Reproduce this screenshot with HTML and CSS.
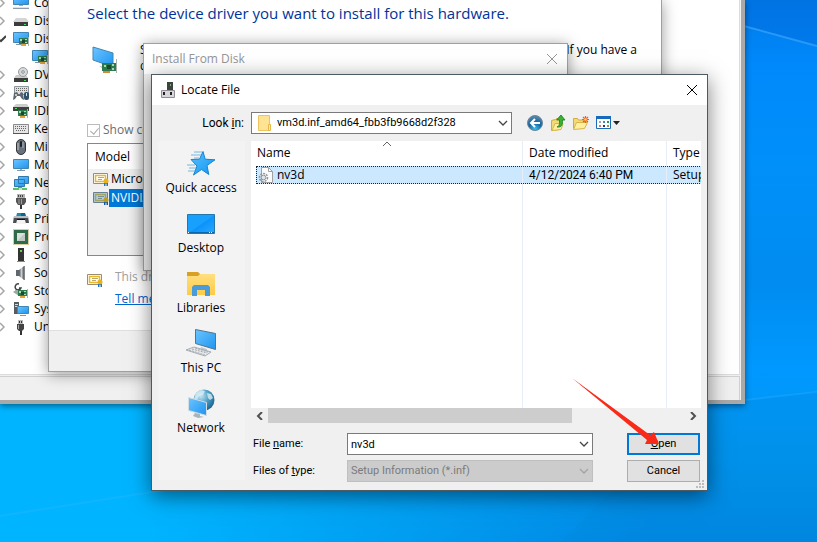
FILE: index.html
```html
<!DOCTYPE html>
<html lang="en">
<head>
<meta charset="utf-8">
<title>Locate File</title>
<link rel="stylesheet" href="styles.css">
</head>
<body>
<svg class="sprite" aria-hidden="true">
  <defs>
    <linearGradient id="blue" x1="0" y1="0" x2="1" y2="1"><stop offset="0" stop-color="#6cc5ff"/><stop offset="1" stop-color="#1e94f0"/></linearGradient>
    <linearGradient id="star" x1="0" y1="0" x2="1" y2="1"><stop offset="0" stop-color="#5cc0fb"/><stop offset="1" stop-color="#0e96f5"/></linearGradient>
    <linearGradient id="desk" x1="0" y1="0" x2="1" y2="1"><stop offset="0" stop-color="#18a0ff"/><stop offset=".5" stop-color="#18a0ff"/><stop offset=".52" stop-color="#0c92fa"/><stop offset="1" stop-color="#2ca9ff"/></linearGradient>
    <linearGradient id="yellow" x1="0" y1="0" x2="0" y2="1"><stop offset="0" stop-color="#ffdf80"/><stop offset="1" stop-color="#ffcb45"/></linearGradient>
    <radialGradient id="globe" cx=".35" cy=".3" r=".8"><stop offset="0" stop-color="#c6e6f3"/><stop offset=".5" stop-color="#4b9cc4"/><stop offset="1" stop-color="#145a86"/></radialGradient>
    <radialGradient id="orb" cx=".5" cy=".9" r=".9"><stop offset="0" stop-color="#38c4ee"/><stop offset=".5" stop-color="#16639f"/><stop offset="1" stop-color="#5e8cae"/></radialGradient>
    <linearGradient id="metal" x1="0" y1="0" x2="1" y2="0"><stop offset="0" stop-color="#555"/><stop offset=".5" stop-color="#ccc"/><stop offset="1" stop-color="#555"/></linearGradient>
  </defs>
  <symbol id="card" viewBox="0 0 10 10"><path d="M0 1h9v6H0z" fill="#2c7a4e"/><path d="M9 0h1v9H9z" fill="#aab2ae"/><path d="M1 2h2v2H1zM6 2h2v1H6zM6 5h2v1H6z" fill="#a9d8b2"/><path d="M3 3h3v3H3z" fill="#174a2f"/><path d="M2 7h5v2H2z" fill="#e0a53a"/></symbol>
  <symbol id="monitor" viewBox="0 0 16 16"><path d="M.5 2.500h15v9H.5z" fill="url(#blue)" stroke="#3f86b5"/><path d="M7 12h2v1H7z" fill="#9ab"/><path d="M4 13h8v1H4z" fill="#8298a8"/></symbol>
  <symbol id="computer" viewBox="0 0 16 16"><path d="M.5 1.500h15v8H.5z" fill="url(#blue)" stroke="#3f86b5"/><path d="M6 10h4v1H6z" fill="#9ab"/><path d="M0 13h16v1H0z" fill="#8a9cae"/><path d="M0 12h16v1H0z" fill="#dce4ea"/></symbol>
  <symbol id="display" viewBox="0 0 16 16"><path d="M.5 1.500h15v10H.5z" fill="url(#blue)" stroke="#3f86b5"/><path d="M3 13h6v1H3z" fill="#8298a8"/><use href="#card" x="6" y="6" width="10" height="10"/></symbol>
  <symbol id="disk" viewBox="0 0 16 16"><path d="M3 5h10l3 4H0z" fill="#d5d5d5"/><path d="M1 9h14v4H1z" fill="#3c3c3c"/><path d="M11 11h2v1h-2z" fill="#4ce05a"/></symbol>
  <symbol id="dvd" viewBox="0 0 16 16"><path d="M3 8h10l2 3H1z" fill="#ccc"/><path d="M1 11h14v4H1z" fill="#3c3c3c"/><circle cx="10" cy="5" r="4.500" fill="#d6d9db" stroke="#9a9a9a"/><circle cx="10" cy="5" r="1.300" fill="#fff" stroke="#888"/><path d="M11 13h2v1h-2z" fill="#4ce05a"/></symbol>
  <symbol id="keyboard" viewBox="0 0 16 16"><path d="M.5 3.500h15v9H.5z" fill="#e6e6e6" stroke="#8b8b8b"/><path d="M2 5.500h12M2 7.500h12M3 9.500h10" stroke="#666" stroke-dasharray="1 1"/><path d="M0 12h16v1H0z" fill="#555"/></symbol>
  <symbol id="hid" viewBox="0 0 16 16"><path d="M1.500 1.500h14v8h-14z" fill="#dce0e3" stroke="#8d949a"/><path d="M3 3.500h11M3 5.500h11" stroke="#666" stroke-dasharray="1 1"/><path d="M0 15l1-7 3-1 2 3 2-3 2 1 1 7-2-1-2-3H4l-2 3z" fill="#5d666f"/><rect x="11" y="7" width="5" height="8" rx="2" fill="#32506a"/><path d="M13 8h1v3h-1z" fill="#d4e4ef"/><path d="M2 9h2v2H2z" fill="#c8c8c8"/></symbol>
  <symbol id="ide" viewBox="0 0 16 16"><path d="M3 1h11l2 3H0z" fill="#ccc"/><path d="M0 4h16v4H0z" fill="#404040"/><path d="M2 5h2v1H2z" fill="#4ce05a"/><use href="#card" x="5" y="6" width="10" height="10"/></symbol>
  <symbol id="mouse" viewBox="0 0 16 16"><rect x="3.500" y=".5" width="9" height="15" rx="4.500" fill="#68717c" stroke="#333"/><path d="M5 4v7" stroke="#c3ccd5"/><rect x="7" y="2" width="2" height="6" rx="1" fill="#1c2228"/><path d="M10 3v6" stroke="#aab4be"/></symbol>
  <symbol id="net" viewBox="0 0 16 16"><path d="M5.500 1.500h10v7h-10zM1.500 4.500h10v7h-10z" fill="url(#blue)" stroke="#2f79ac"/><path d="M5 12h4v1H5z" fill="#888"/><path d="M0 13h14v2H0z" fill="#5cc163"/><path d="M6 13h3v2H6z" fill="#c5e6c7"/></symbol>
  <symbol id="port" viewBox="0 0 16 16"><path d="M4 1h8v4H4z" fill="#b3b3b3"/><path d="M5 2h1v2H5zM7 2h1v2H7zM9 2h1v2H9z" fill="#444"/><path d="M3 5h10v4l-2 3H5L3 9z" fill="#555"/><path d="M6 6v5M8.500 6v5" stroke="#a0a0a0"/><path d="M7 12h2v4H7z" fill="#333"/></symbol>
  <symbol id="printer" viewBox="0 0 16 16"><path d="M4 2h8l1 4H3z" fill="#238ca8"/><path d="M8 2h4l1 4H8z" fill="#165f92"/><path d="M1 5h14l1 7H0z" fill="#484d52"/><path d="M1 5h14v2H1z" fill="#b7bec4"/><path d="M4 9h8l1 4H3z" fill="#f3f3f3"/><path d="M4 8h8v1H4z" fill="#111"/></symbol>
  <symbol id="cpu" viewBox="0 0 16 16"><path d="M.5 .5h15v15H.5z" fill="none" stroke="#b89a48" stroke-dasharray="1 1"/><path d="M1 1h14v14H1z" fill="#2f6a49"/><path d="M4 4h8v8H4z" fill="#dce0dc"/><path d="M4 12l8-8v8z" fill="#bfc8c1"/></symbol>
  <symbol id="soft" viewBox="0 0 16 16"><path d="M5 1h6v13H5z" fill="#333"/><path d="M7 3h2v2H7z" fill="#62d353"/><path d="M4 14h8v1H4z" fill="#888"/></symbol>
  <symbol id="sound" viewBox="0 0 16 16"><path d="M3 5h3v6H3z" fill="#5e6770"/><path d="M6 5l5-4v14l-5-4z" fill="url(#metal)"/><path d="M11 1h1v14h-1z" fill="#7e8790"/></symbol>
  <symbol id="storage" viewBox="0 0 16 16"><path d="M6 1a3 3 0 1 0 2 4H6M2 9l5-3" fill="none" stroke="#444" stroke-width="1.500"/><path d="M0 9l3-2h12v6H6z" fill="#9ba9a1"/><use href="#card" x="5" y="6" width="10" height="10"/></symbol>
  <symbol id="system" viewBox="0 0 16 16"><path d="M1 1h5v12H1z" fill="#555c62"/><path d="M2 3h3v1H2zM2 5h3v1H2z" fill="#d5dbe0"/><path d="M4.500 5.500h11v7h-11z" fill="url(#blue)" stroke="#3f86b5"/><path d="M7 14h6v1H7z" fill="#8298a8"/></symbol>
  <symbol id="usb" viewBox="0 0 16 16"><path d="M5 1h5v4H5z" fill="#bbb"/><path d="M6 2h1v2H6zM8 2h1v2H8z" fill="#333"/><path d="M4 5h7v5l-2 2H6l-2-2z" fill="#444"/><path d="M5.500 6v4" stroke="#aaa"/><path d="M7 12h2v4H7z" fill="#333"/></symbol>
  <symbol id="chev" viewBox="0 0 6 10"><path d="M0 1l4 4-4 4" fill="none" stroke="#a6a6a6" stroke-width="1.500"/></symbol>
  <symbol id="chev-open" viewBox="0 0 6 10"><path d="M0 6l1 1 5-5" fill="none" stroke="#404040" stroke-width="2"/></symbol>
  <symbol id="cert" viewBox="0 0 16 14"><path d="M.5 1.500h14v10H.5z" fill="#fff" stroke="#998e70"/><path d="M2.500 3.500h10v6h-10z" fill="none" stroke="#e9b92c" stroke-width="1.500"/><path d="M5 5.500h6M5 7.500h4" stroke="#bda76d"/><circle cx="13" cy="9" r="2.500" fill="#e9b21c"/><path d="M11 11h1.500v3H11zM13.500 11H15v3h-1.500z" fill="#2376c0"/></symbol>
  <symbol id="cert-on" viewBox="0 0 16 14"><path d="M.5 1.500h14v10H.5z" fill="#a9cdea" stroke="#667f91"/><path d="M2.500 3.500h10v6h-10z" fill="none" stroke="#a6a35a" stroke-width="1.500"/><path d="M5 5.500h6M5 7.500h4" stroke="#788e91"/><circle cx="13" cy="9" r="2.500" fill="#bb9c24"/><path d="M11 11h1.500v3H11zM13.500 11H15v3h-1.500z" fill="#14569b"/></symbol>
  <symbol id="close" viewBox="0 0 12 12"><path d="M1 1l10 10M11 1L1 11" fill="none" stroke="currentColor"/></symbol>
  <symbol id="down" viewBox="0 0 10 6"><path d="M1 1l4 4 4-4" fill="none" stroke="currentColor" stroke-width="1.300"/></symbol>
</svg>

<main class="desktop">
  <svg class="rays" viewBox="0 0 817 542" preserveAspectRatio="none" aria-hidden="true">
    <path d="M740 24L817 46V0H740z" fill="#0068da" opacity=".35"/>
    <path d="M740 25L817 46" stroke="#45a9ff" stroke-width="2" opacity=".6"/>
    <path d="M0 516L700 405L817 392" stroke="#35b6ff" stroke-width="2" opacity=".3" fill="none"/>
    <path d="M700 406L817 392V542H560z" fill="#0087d8" opacity=".2"/>
  </svg>

  <section class="window manager" aria-label="Device Manager">
    <ul class="tree">
      <li><svg class="tw"><use href="#chev"/></svg><svg class="i16"><use href="#computer"/></svg>Co</li>
      <li><svg class="tw"><use href="#chev"/></svg><svg class="i16"><use href="#disk"/></svg>Dis</li>
      <li><svg class="tw"><use href="#chev-open"/></svg><svg class="i16"><use href="#display"/></svg>Dis</li>
      <li class="child"><svg class="i16"><use href="#display"/></svg></li>
      <li><svg class="tw"><use href="#chev"/></svg><svg class="i16"><use href="#dvd"/></svg>DV</li>
      <li><svg class="tw"><use href="#chev"/></svg><svg class="i16"><use href="#hid"/></svg>Hu</li>
      <li><svg class="tw"><use href="#chev"/></svg><svg class="i16"><use href="#ide"/></svg>IDE</li>
      <li><svg class="tw"><use href="#chev"/></svg><svg class="i16"><use href="#keyboard"/></svg>Key</li>
      <li><svg class="tw"><use href="#chev"/></svg><svg class="i16"><use href="#mouse"/></svg>Mi</li>
      <li><svg class="tw"><use href="#chev"/></svg><svg class="i16"><use href="#monitor"/></svg>Mo</li>
      <li><svg class="tw"><use href="#chev"/></svg><svg class="i16"><use href="#net"/></svg>Ne</li>
      <li><svg class="tw"><use href="#chev"/></svg><svg class="i16"><use href="#port"/></svg>Po</li>
      <li><svg class="tw"><use href="#chev"/></svg><svg class="i16"><use href="#printer"/></svg>Pri</li>
      <li><svg class="tw"><use href="#chev"/></svg><svg class="i16"><use href="#cpu"/></svg>Pro</li>
      <li><svg class="tw"><use href="#chev"/></svg><svg class="i16"><use href="#soft"/></svg>Sof</li>
      <li><svg class="tw"><use href="#chev"/></svg><svg class="i16"><use href="#sound"/></svg>Sou</li>
      <li><svg class="tw"><use href="#chev"/></svg><svg class="i16"><use href="#storage"/></svg>Sto</li>
      <li><svg class="tw"><use href="#chev"/></svg><svg class="i16"><use href="#system"/></svg>Sys</li>
      <li><svg class="tw"><use href="#chev"/></svg><svg class="i16"><use href="#usb"/></svg>Un</li>
    </ul>
    <div class="status"></div>
  </section>

  <section class="window wizard" aria-label="Update Drivers">
    <div class="wizard-body">
      <h1>Select the device driver you want to install for this hardware.</h1>
      <div class="intro">
        <svg class="device" viewBox="0 0 28 28"><path d="M1 1l20 6v14L1 14z" fill="url(#blue)" stroke="#3f86b5"/><path d="M7 20l8 1-4 2z" fill="#b7c5ce"/><path d="M10 17h14v8H10z" fill="#2c7a4e"/><path d="M24 13h1v14h-1z" fill="#aab2ae"/><path d="M12 19h2v2h-2zM20 18h2v2h-2zM20 22h2v2h-2z" fill="#a9d8b2"/><path d="M15 19h4v4h-4z" fill="#174a2f"/><path d="M11 25h7v2h-7z" fill="#cf8c35"/></svg>
        <p><span>S<br>d</span><span>If you have a</span></p>
      </div>
      <label class="compat"><input type="checkbox" checked disabled>Show co</label>
      <ul class="models">
        <li class="head">Model</li>
        <li><svg class="cert"><use href="#cert"/></svg><span>Micros</span></li>
        <li class="on"><svg class="cert"><use href="#cert-on"/></svg><span>NVIDIA</span></li>
      </ul>
      <div class="signed">
        <svg class="cert"><use href="#cert"/></svg>
        <p>This dri<br><a href="#why">Tell me</a></p>
      </div>
    </div>
    <div class="wizard-foot"></div>
  </section>

  <section class="window install" aria-label="Install From Disk">
    <header class="titlebar"><h2>Install From Disk</h2><button class="x" aria-label="Close Install From Disk"><svg><use href="#close"/></svg></button></header>
  </section>

  <section class="window locate" role="dialog" aria-label="Locate File">
    <header class="titlebar">
      <svg class="i16" viewBox="0 0 16 16"><path d="M7 0h6v8H7z" fill="#3c4440"/><path d="M10 2h1v2h-1z" fill="#77b56b"/><path d="M1.500 8.500h13v7h-13z" fill="#d8d8dc" stroke="#8f8f94"/><path d="M3 10h2v3H3zM10 10h2v3h-2z" fill="#222"/></svg>
      <h2>Locate File</h2><button class="x" aria-label="Close"><svg><use href="#close"/></svg></button>
    </header>
    <div class="lookbar">
      <label for="look">Look <u>i</u>n:</label>
      <div class="combo look">
        <svg class="folder" viewBox="0 0 14 16"><path d="M.5 .5h11v15H.5z" fill="#ffe394" stroke="#edc55c"/><path d="M10.500 9.500h2v6h-2z" fill="#ffe9a8" stroke="#e6b84a"/></svg>
        <select id="look"><option>vm3d.inf_amd64_fbb3fb9668d2f328</option></select>
        <svg class="arrow"><use href="#down"/></svg>
      </div>
      <div class="tools">
        <button aria-label="Back"><svg viewBox="0 0 16 16"><circle cx="8" cy="8" r="7.500" fill="url(#orb)" stroke="#6d8596"/><path d="M13 8H4M8 4L4 8l4 4" fill="none" stroke="#fff" stroke-width="2"/></svg></button>
        <button aria-label="Up one level"><svg viewBox="0 0 16 16"><path d="M1.500 5.500l4-1 1-1h3v11l-8 1z" fill="#f3da78" stroke="#d2ac3c"/><path d="M2 15.500l3-7h8l-2 6z" fill="#ffef9f" stroke="#d8b44a"/><path d="M7 12c3-1 2.500-4 2.500-7H6.500L11 0l4 5h-2.500c0 5-.5 7.500-5.500 7z" fill="#39b234" stroke="#197c20" stroke-width=".8"/></svg></button>
        <button aria-label="New folder"><svg viewBox="0 0 16 16"><path d="M.5 13.500v-10h4l1 1.500h6v3" fill="#f3da78" stroke="#d2ac3c"/><path d="M.5 14.500l3-7h11l-3 6z" fill="#ffef9f" stroke="#d8b44a"/><path d="M12.500 1v7M9 4.500h7M10 2l5 5M15 2l-5 5" stroke="#f05a28" stroke-width="1.200"/><circle cx="12.500" cy="4.500" r="1.300" fill="#ffd75e"/></svg></button>
        <button class="view" aria-label="View menu"><svg viewBox="0 0 25 16"><path d="M.5 1.500h14v12H.5z" fill="#fff" stroke="#1a6cb8"/><path d="M0 1h15v3H0z" fill="#1769bd"/><path d="M3 6h2v2H3z" fill="#a8a0b8"/><path d="M7 6h2v2H7z" fill="#388ad0"/><path d="M11 6h2v2h-2z" fill="#35963c"/><path d="M3 10h2v2H3z" fill="#d67865"/><path d="M7 10h2v2H7z" fill="#24357d"/><path d="M11 10h2v2h-2z" fill="#ad8d32"/><path d="M17 6h7l-3.500 4z" fill="#222"/></svg></button>
      </div>
    </div>
    <div class="middle">
      <nav class="places" aria-label="Places">
        <button><svg viewBox="0 0 32 32"><path d="M18 3.500l2.200 7.700 9.800.6-8 5.700 1.800 9-7.300-5-8 5.500 3.500-9L6 11.500l8.500-.3z" fill="url(#star)" stroke="#1684cf" stroke-linejoin="round"/><path d="M9 4h8M6 7h10M9 10h5M2 17h8M4 20h7M3 23h7" stroke="#74b8dc"/></svg>Quick access</button>
        <button><svg viewBox="0 0 32 32"><path d="M2.500 6.500h27v19h-27z" fill="url(#desk)" stroke="#2377ad"/><path d="M3 24.500h26" stroke="#0b67a8"/><path d="M3 24.500h2M24 24.500h4" stroke="#fff" stroke-dasharray="1 1"/></svg>Desktop</button>
        <button><svg viewBox="0 0 32 32"><path d="M2 4h11l2 2v4H2z" fill="#d9a023"/><path d="M2 8h11l2-2h15v21H2z" fill="url(#yellow)"/><path d="M7 28V19l2-2h14l2 2v9h-5v-6h-8v6z" fill="#4a9bd9"/></svg>Libraries</button>
        <button><svg viewBox="0 0 32 32"><path d="M10.500 1.500l20 4v16l-20-6z" fill="url(#blue)" stroke="#52758d"/><path d="M16 19l6 2v2l5 1-8 2-4-2z" fill="#c3cbd1"/><path d="M1 22l8-3 17 5-6 4z" fill="#e7eaec" stroke="#a7adb1"/><path d="M4 22l16 5M7 21l15 4M10 20l13 4" stroke="#a2a9ae" stroke-dasharray="2 1"/></svg>This PC</button>
        <button><svg viewBox="0 0 32 32"><circle cx="19" cy="12" r="10.500" fill="url(#globe)"/><path d="M11 5l5-3 4 1-2 4-4 1-2 4-3-1zM22 5l4 1 2 4-3 2-2-2z" fill="#d9eef5" opacity=".8"/><path d="M3.500 9.500l18 5v13l-18-5z" fill="url(#blue)" stroke="#d3dde3"/><path d="M10 25l5 1v2l4 1-6 1-5-2z" fill="#aab4bb"/></svg>Network</button>
      </nav>
      <div class="list">
        <div class="list-view">
          <table>
            <colgroup><col class="c-name"><col class="c-date"><col class="c-type"></colgroup>
            <thead><tr><th><svg class="sort" viewBox="0 0 10 6"><path d="M1 5l4-4 4 4" fill="none" stroke="#666"/></svg>Name</th><th>Date modified</th><th>Type</th></tr></thead>
            <tbody>
              <tr class="file"><td><div class="cell first"><svg class="i16" viewBox="0 0 16 16"><path d="M3.500 .5h7l4 4v11h-11z" fill="#fafafa" stroke="#a0a0a0"/><path d="M10.500 .5v4h4" fill="none" stroke="#a0a0a0"/><circle cx="5.500" cy="10.500" r="4" fill="none" stroke="#8d979e" stroke-width="1.500" stroke-dasharray="2 1"/><circle cx="5.500" cy="10.500" r="2.300" fill="#dfe4e7" stroke="#8d979e"/></svg>nv3d</div></td><td><div class="cell date">4/12/2024 6:40 PM</div></td><td><div class="cell">Setup</div></td></tr>
              <tr class="fill"><td></td><td></td><td></td></tr>
            </tbody>
          </table>
        </div>
        <div class="scroll">
          <button aria-label="Scroll left"><svg viewBox="0 0 8 8"><path d="M6 0L2 4l4 4" fill="none" stroke="#505050" stroke-width="2"/></svg></button>
          <div class="track"><div class="thumb"></div></div>
          <button aria-label="Scroll right"><svg viewBox="0 0 8 8"><path d="M2 0l4 4-4 4" fill="none" stroke="#505050" stroke-width="2"/></svg></button>
        </div>
        <form class="fields">
          <label for="fname">File <u>n</u>ame:</label>
          <div class="combo"><input id="fname" type="text" value="nv3d"><svg class="arrow"><use href="#down"/></svg></div>
          <button type="button" class="btn primary"><u>O</u>pen</button>
          <label for="ftype">Files of <u>t</u>ype:</label>
          <div class="combo off"><select id="ftype" disabled><option>Setup Information (*.inf)</option></select><svg class="arrow"><use href="#down"/></svg></div>
          <button type="button" class="btn">Cancel</button>
        </form>
      </div>
    </div>
    <svg class="grip" viewBox="0 0 8 8"><path d="M6 0h2v2H6zM3 3h2v2H3zM6 3h2v2H6zM0 6h2v2H0zM3 6h2v2H3zM6 6h2v2H6z" fill="#bdbdbd"/></svg>
    <svg class="pointer" viewBox="0 0 88 68"><path d="M0 0L78 57L82 54L87 66L73 66L75 62z" fill="#fa2a18"/></svg>
  </section>
</main>
</body>
</html>
```
FILE: styles.css
```css
* { box-sizing: border-box; }

body {
  margin: 0;
  font: 12px/16px "Open Sans", "Noto Sans", sans-serif;
  color: #000;
}

h1, h2, p, ul { margin: 0; padding: 0; font-weight: 400; }
ul { list-style: none; }
svg { display: block; flex: none; }
button, input, select { font: inherit; color: inherit; margin: 0; }
button { padding: 0; border: 0; background: none; }

.sprite { position: absolute; width: 0; height: 0; }
.i16 { width: 16px; height: 16px; }

.desktop {
  position: relative;
  height: 100vh;
  overflow: hidden;
  background:
    linear-gradient(90deg, #00b4ff 0, #00b4ff 18%, transparent 80%),
    linear-gradient(180deg, #007ae8 0, #0089fb 12%, #0090fa 30%, #008cf0 52%, #0099ff 68%, #0094ef 85%, #0086e2 100%);
}
.rays { position: absolute; inset: 0; width: 100%; height: 100%; }

.window { position: absolute; display: flex; flex-direction: column; background: #f0f0f0; }

/* Device Manager */
.manager {
  inset: 0 72px 138px 0;
  border: solid #a9a9a9;
  border-width: 0 4px 4px 0;
  box-shadow: 0 2px 6px rgba(0, 0, 0, .45);
}
.tree {
  flex: 1;
  min-height: 0;
  overflow: hidden;
  margin: -6px 1px 0 0;
  background: #fff;
  border: solid #dcdcdc;
  border-width: 0 1px 1px 0;
}
.tree li { display: flex; align-items: center; height: 18px; white-space: nowrap; }
.tree .tw { width: 6px; height: 10px; margin-right: 7px; }
.tree .i16 { margin-right: 5px; }
.tree .child { padding-left: 32px; }
.status { height: 24px; margin: 1px 1px 0 0; border-top: 1px solid #d0d0d0; border-right: 1px solid #d0d0d0; }

/* Driver wizard */
.wizard {
  inset: 0 155px 170px 48px;
  border: 1px solid #a0a0a0;
  border-top: 0;
  box-shadow: 0 2px 14px rgba(0, 0, 0, .4);
}
.wizard-body { flex: 1; min-height: 0; padding: 1px 24px 0 38px; background: #fff; border-bottom: 1px solid #dfdfdf; }
.wizard-foot { height: 40px; }
.wizard h1 { font-size: 15px; line-height: 24px; color: #039; white-space: nowrap; }
.intro { display: flex; gap: 20px; margin-top: 17px; padding-left: 5px; }
.device { width: 28px; height: 28px; margin-top: 4px; }
.intro p { flex: 1; display: flex; justify-content: space-between; white-space: nowrap; }
.compat { display: flex; align-items: center; gap: 3px; margin-top: 48px; height: 16px; color: #6d6d6d; }
.compat input { appearance: none; width: 13px; height: 13px; border: 1px solid #bcbcbc; background: #fff; }
.compat input:checked::after { content: ""; display: block; width: 4px; height: 7px; margin: 1px 0 0 4px; border: solid #a8a8a8; border-width: 0 1px 1px 0; transform: rotate(40deg); }
.models { height: 113px; width: 50%; margin-top: 5px; border: 1px solid #828790; background: #f0f0f0; }
.models li { display: flex; align-items: center; height: 19px; padding-left: 5px; white-space: nowrap; }
.models .head { height: 25px; padding-left: 7px; background: #fff; }
.models span { flex: 1; padding: 0 3px 0 2px; line-height: 18px; }
.models .on span { background: #0078d7; color: #fff; }
.cert { width: 16px; height: 14px; }
.signed { display: flex; gap: 12px; margin-top: 10px; line-height: 22px; color: #a0a0a0; }
.signed .cert { margin-top: 7px; }
.signed a { color: #0066cc; }

/* Title bars */
.titlebar { display: flex; align-items: center; height: 30px; background: #fff; }
.titlebar h2 { flex: 1; font-size: 12px; }
.x { display: grid; place-items: center; width: 30px; height: 30px; }
.x svg { width: 12px; height: 12px; }

.install {
  inset: 43px 249px 271px 143px;
  border: 1px solid #a0a0a0;
  box-shadow: 0 2px 14px rgba(0, 0, 0, .4);
}
.install .titlebar { padding-left: 8px; color: #969696; }

/* Locate File dialog */
.locate {
  inset: 74px 109px 51px 151px;
  border: 1px solid #4b5a63;
  box-shadow: 0 5px 20px rgba(0, 0, 0, .5);
}
.locate .titlebar { padding-left: 8px; gap: 5px; }
.lookbar { display: flex; align-items: center; height: 36px; padding-left: 6px; font-family: Roboto, sans-serif; }
.lookbar label { width: 86px; text-align: right; margin-right: 7px; }
.combo { position: relative; height: 22px; }
.combo select, .combo input {
  appearance: none;
  display: block;
  width: 100%;
  height: 100%;
  padding: 0 20px 0 3px;
  border: 1px solid #7a7a7a;
  border-radius: 0;
  outline: 0;
  background: #fff;
  font-size: 11px;
}
.look { flex: 0 1 261px; }
.look select { padding-left: 25px; }
.look .folder { position: absolute; left: 7px; top: 3px; width: 14px; height: 16px; }
.combo .arrow { position: absolute; right: 4px; top: 8px; width: 10px; height: 6px; color: #444; pointer-events: none; }
.off select { color: #7b7b7b; opacity: 1; background: #ccc; border-color: #bfbfbf; }
.off .arrow { color: #a3a3a3; }
.tools { display: flex; gap: 7px; margin-left: 15px; }
.tools svg { width: 16px; height: 16px; }
.tools .view svg { width: 25px; }

.middle { flex: 1; min-height: 0; display: flex; gap: 6px; padding: 0 6px 10px; }
.places { width: 87px; padding-top: 7px; background: #f3f3f3; }
.places button { display: flex; flex-direction: column; align-items: center; width: 86px; height: 60px; }
.places svg { width: 32px; height: 32px; }
.list { flex: 1; min-width: 0; display: flex; flex-direction: column; }
.list-view { flex: 1; min-height: 0; overflow: hidden; background: #fff; }
table { table-layout: fixed; width: 520px; height: 100%; border-collapse: separate; border-spacing: 0; }
.c-name { width: 272px; }
.c-date { width: 144px; }
th, td { padding: 0; text-align: left; font-weight: 400; border-right: 1px solid #e8eef8; white-space: nowrap; }
th { position: relative; height: 25px; padding: 0 6px 1px; }
.sort { position: absolute; left: 131px; top: 0; width: 10px; height: 6px; }
.cell { display: flex; align-items: center; height: 18px; padding-left: 6px; border: dotted #222; border-width: 1px 0; background: #cce8ff; }
.cell.first { margin-left: 5px; padding-left: 1px; gap: 3px; border-left-width: 1px; }
.cell.date { font-family: Roboto, sans-serif; }
.file { height: 18px; }

.scroll { display: flex; height: 15px; }
.scroll button { width: 17px; display: grid; place-items: center; }
.scroll button svg { width: 8px; height: 8px; }
.track { flex: 1; }
.thumb { width: 73%; height: 15px; background: #cdcdcd; }

.fields {
  display: grid;
  grid-template-columns: 94px 1fr 73px;
  row-gap: 5px;
  align-items: center;
  margin: 10px 1px -2px 2px;
  font: 11px/16px Roboto, sans-serif;
}
.fields .combo { margin-right: 34px; }
.btn { height: 22px; border: 1px solid #adadad; background: #e1e1e1; }
.primary { border: 2px solid #0078d7; }
.grip { position: absolute; right: 3px; bottom: 2px; width: 8px; height: 8px; }
.pointer { position: absolute; right: 47px; bottom: 44px; width: 88px; height: 68px; }
```
